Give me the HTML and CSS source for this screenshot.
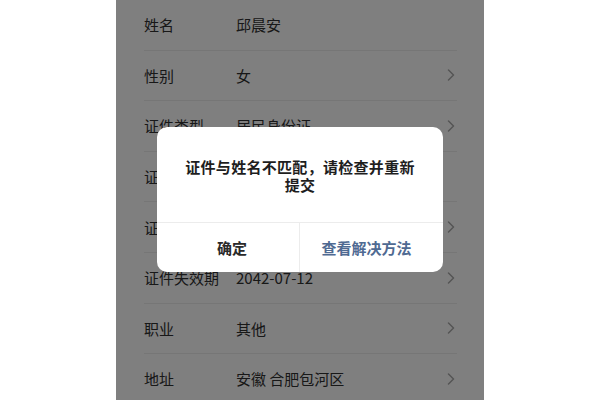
FILE: index.html
```html
<!DOCTYPE html>
<html lang="zh-CN">
<head>
<meta charset="utf-8">
<title>证件信息</title>
<link rel="stylesheet" href="styles.css">
</head>
<body>
<div class="screen">
  <ul class="list">
    <li class="row"><span class="label">姓名</span><span class="value">邱晨安</span></li>
    <li class="row"><span class="label">性别</span><span class="value">女</span><svg class="chev" viewBox="0 0 8 12"><polyline points="1.5,1 6.5,6 1.5,11"/></svg></li>
    <li class="row"><span class="label">证件类型</span><span class="value">居民身份证</span><svg class="chev" viewBox="0 0 8 12"><polyline points="1.5,1 6.5,6 1.5,11"/></svg></li>
    <li class="row"><span class="label">证件号码</span><span class="value"></span></li>
    <li class="row"><span class="label">证件生效期</span><span class="value"></span><svg class="chev" viewBox="0 0 8 12"><polyline points="1.5,1 6.5,6 1.5,11"/></svg></li>
    <li class="row"><span class="label">证件失效期</span><span class="value">2042-07-12</span><svg class="chev" viewBox="0 0 8 12"><polyline points="1.5,1 6.5,6 1.5,11"/></svg></li>
    <li class="row"><span class="label">职业</span><span class="value">其他</span><svg class="chev" viewBox="0 0 8 12"><polyline points="1.5,1 6.5,6 1.5,11"/></svg></li>
    <li class="row"><span class="label">地址</span><span class="value">安徽 合肥包河区</span><svg class="chev" viewBox="0 0 8 12"><polyline points="1.5,1 6.5,6 1.5,11"/></svg></li>
  </ul>
  <div class="mask">
    <div class="dialog">
      <p class="message">证件与姓名不匹配，请检查并重新提交</p>
      <div class="actions">
        <button class="btn btn-ok">确定</button>
        <button class="btn btn-link">查看解决方法</button>
      </div>
    </div>
  </div>
</div>
</body>
</html>
```

FILE: styles.css
```css
* { box-sizing: border-box; }
html, body {
  margin: 0;
  padding: 0;
  background: #ffffff;
  height: 400px;
  overflow: hidden;
}
body {
  display: flex;
  justify-content: center;
  font-family: "Noto Sans CJK SC", "Noto Sans", sans-serif;
}
.screen {
  position: relative;
  width: 368px;
  height: 400px;
  background: #ffffff;
  overflow: hidden;
}
.list {
  list-style: none;
  margin: 0;
  padding: 0 27px 0 28px;
  display: flex;
  flex-direction: column;
}
.row {
  height: 50.6px;
  flex: 0 0 auto;
  display: flex;
  align-items: center;
  border-bottom: 1px solid #ececec;
  font-size: 15px;
  color: #303030;
}
.label {
  width: 92px;
  flex: 0 0 92px;
  white-space: nowrap;
}
.value {
  flex: 1;
  white-space: nowrap;
}
.chev {
  width: 8px;
  height: 12px;
  margin-right: 2px;
  fill: none;
  stroke: #aaaaaa;
  stroke-width: 1.5;
  stroke-linecap: round;
  stroke-linejoin: round;
}
.mask {
  position: absolute;
  inset: 0;
  background: rgba(0, 0, 0, 0.5);
  display: flex;
  align-items: center;
  justify-content: center;
}
.dialog {
  width: 286px;
  background: #ffffff;
  border-radius: 10px;
  overflow: hidden;
  margin-top: -2px;
}
.message {
  margin: 0;
  padding: 31px 24px 27px;
  text-align: center;
  font-size: 15px;
  letter-spacing: 0.3px;
  line-height: 18.5px;
  font-weight: 600;
  color: #1e1e1e;
}
.actions {
  display: grid;
  grid-template-columns: 1fr 1fr;
  border-top: 1px solid #ececec;
  height: 50px;
}
.btn {
  border: 0;
  background: transparent;
  font-family: inherit;
  font-size: 15px;
  font-weight: 600;
  padding: 0;
  cursor: pointer;
}
.btn-ok {
  color: #2a2a2a;
  padding-left: 8px;
  border-right: 1px solid #ececec;
}
.btn-link {
  color: #4f6a92;
  padding-right: 10px;
}
```
